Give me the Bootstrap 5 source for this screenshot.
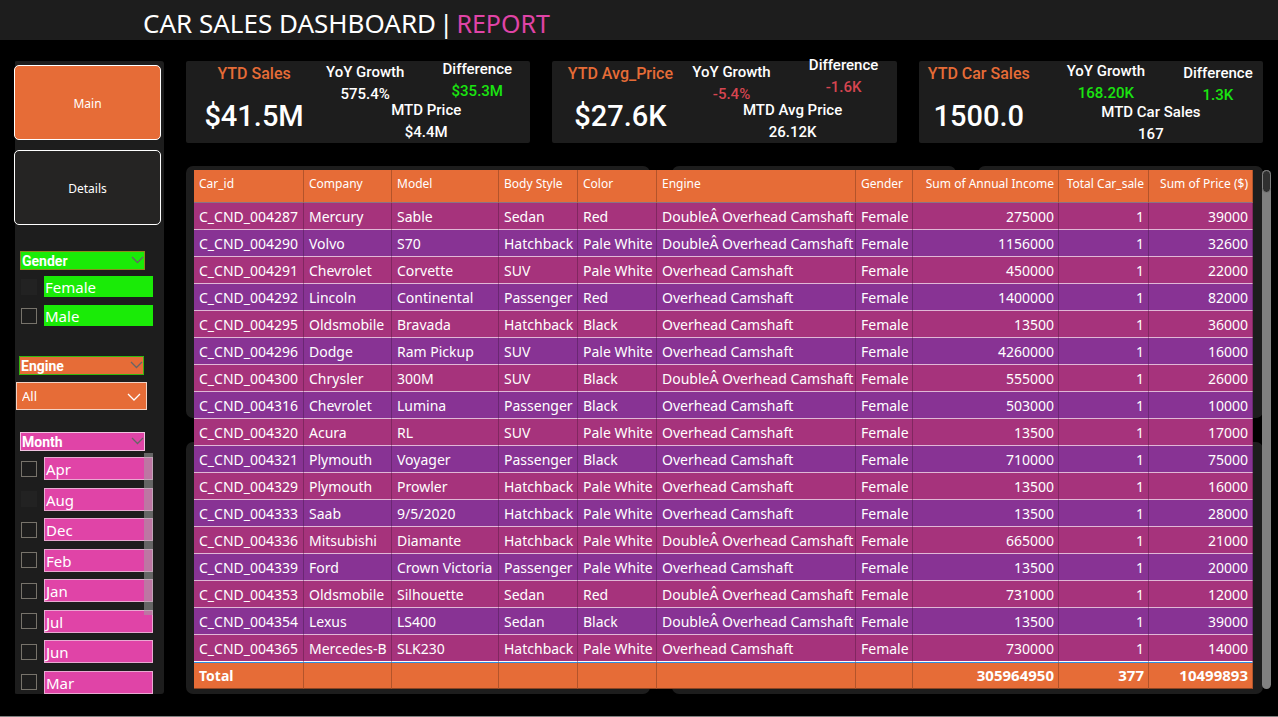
<!DOCTYPE html>
<html lang="en">
<head>
<meta charset="utf-8">
<meta name="viewport" content="width=device-width, initial-scale=1">
<title>Car Sales Dashboard | Report</title>
<link rel="stylesheet" href="https://cdn.jsdelivr.net/npm/bootstrap@5.3.0/dist/css/bootstrap.min.css">
<style>
  :root { --panel: #1d1d1d; --orange: #e66c37; --pink: #e044a7; --green: #1aeb07; --good: #1ae410; --bad: #d64550; }
  body { background: #000; color: #fff; font-family: "Noto Sans", "Open Sans", sans-serif; font-size: 14px; border-bottom: 1px solid #808080; }
  .din { font-family: Roboto, "Liberation Sans", sans-serif; font-weight: 500; }
  .topbar { background: var(--panel); height: 40px; padding: 4px 0 0 143px; }
  .topbar h1 { display: flex; gap: 3px; font-size: 26px; line-height: 38px; font-weight: 400; white-space: nowrap; }
  .pinktext { color: var(--pink); font-size: 25px; }
  .shell { gap: 22px; padding: 21px 7px 22px 14px; }

  /* Sidebar */
  .side { width: 150px; background: linear-gradient(to right, transparent 1px, var(--panel) 1px); border-radius: 3px; }
  .side nav { gap: 10px; padding-top: 4px; }
  .navbtn { width: 147px; height: 75px; padding-top: 3px; border: 1px solid #fff; border-radius: 5px; background: #252423; color: #fff; font-size: 12px; }
  .navbtn.active-page { background: var(--orange); }
  .slicer-head { width: 125px; height: 19px; margin-left: 6px; padding: 1px 0 0 1px; color: #fff; font-size: 14px; line-height: 17px; font-weight: 700; border: 1px solid; }
  .slicer-head svg { color: #666; stroke-width: 1.300; }
  .head-green { margin-top: 26px; background: var(--green); border-color: #8d8a1c; }
  .head-orange { margin-top: 30px; margin-left: 5px; background: var(--orange); border-color: #35b60e; }
  .head-pink { margin-top: 22px; background: var(--pink); border-color: #f0c4e0; }
  .slicer-list { margin-top: 6px; }
  .opt { padding-left: 7px; gap: 7px; }
  .opt input { appearance: none; flex: none; width: 16px; height: 16px; margin: 0; border: 1px solid #77736b; background: transparent; }
  .opt input.quiet { border-color: #222; background: #222; }
  .opt label { width: 109px; padding-left: 1px; font-size: 15px; }
  .opt-green label { height: 21px; line-height: 22px; background: var(--green); }
  .opt-pink label { height: 23px; line-height: 22px; background: var(--pink); border: 1px solid #e9a9d2; }
  .engine-pick { width: 131px; height: 28px; margin: 7px 0 0 2px; }
  .engine-pick select { appearance: none; width: 100%; height: 100%; padding: 2px 5px 0; color: #fff; background: var(--orange); border: 1px solid #f3d2c4; border-radius: 0; font-size: 13px; }
  .engine-pick svg { position: absolute; right: 6px; top: 11px; pointer-events: none; }
  .month-thumb { position: absolute; right: 11px; top: -4px; width: 9px; height: 162px; background: rgba(160,160,160,.55); }

  /* KPI cards */
  .content { min-width: 0; padding-right: 8px; }
  .kpis { display: grid; grid-template-columns: repeat(3, 1fr); gap: 22px; }
  .kpi { display: grid; grid-template-columns: 136fr 102fr 106fr; grid-template-rows: 41px 41px; background: var(--panel); border-radius: 2px; text-align: center; white-space: nowrap; }
  .kpi-wide { grid-template-columns: 120fr 134fr 90fr; }
  .kpi-main { grid-row: span 2; padding-top: 2px; }
  .kpi-name { color: var(--orange); font-size: 16px; line-height: 22px; }
  .kpi-value { font-size: 29px; line-height: 40px; margin-top: 11px; }
  .metric { display: flex; flex-direction: column; gap: 6px; font-size: 15px; line-height: 16px; }
  .metric-yoy { padding: 3px 16px 0 0; }
  .kpi-wide .metric-yoy { padding: 2px 0 0; }
  .kpi-wide .metric-diff { padding-top: 4px; }
  .metric-raised { margin-top: -4px; }
  .metric-mtd { grid-column: 2 / 4; }
  .kpi-wide .metric-mtd { padding-top: 2px; }
  .good { color: var(--good); } .bad { color: var(--bad); }

  /* Data table over its backing panels */
  .stage { margin-top: 23px; padding: 4px 10px 5px 8px; }
  .backing { position: absolute; inset: 0; display: grid; grid-template-columns: 464fr 285fr 285fr; grid-template-rows: 1fr 1fr; gap: 24px 22px; }
  .backing span { background: var(--panel); border-radius: 7px; }
  .backing span:last-child { grid-column: 2 / 4; }
  .cars { position: relative; table-layout: fixed; width: 100%; border-collapse: separate; border-spacing: 0; white-space: nowrap; }
  .cars th, .cars td { padding: 0 4px 0 5px; border-right: 1px solid rgba(0,0,0,.22); overflow: hidden; }
  .cars thead th { height: 33px; padding-bottom: 5px; background: var(--orange); border-bottom: 1px solid #8a7285; font-size: 12px; font-weight: 400; }
  .cars tbody td { height: 27px; padding-top: 1px; line-height: 25px; background: #a6337c; border-bottom: 1px solid #e0b8d6; }
  .cars tbody tr:nth-child(even) td { background: #883394; }
  .cars tbody tr:last-child td { border-bottom-color: #fff; }
  .cars tfoot td, .cars tfoot th { height: 27px; background: var(--orange); font-weight: 700; border-top: 1px solid #2b8ee6; border-bottom: 1px solid #8c4524; }
  .cars tfoot td { font-size: 15px; }
  .scroll-track { position: absolute; right: -8px; top: 4px; bottom: 5px; width: 9px; background: #808080; border-radius: 5px; }
  .scroll-track i { display: block; height: 23px; background: #303030; border: 1px solid #808080; border-radius: 5px; }
</style>
</head>
<body class="min-vh-100 overflow-x-hidden">
<header class="topbar">
  <h1 class="m-0"><span>CAR SALES DASHBOARD</span> <span>|</span> <span class="pinktext">REPORT</span></h1>
</header>

<div class="shell d-flex">
  <aside class="side d-flex flex-column flex-shrink-0">
    <nav class="d-flex flex-column">
      <button type="button" class="navbtn active-page">Main</button>
      <button type="button" class="navbtn">Details</button>
    </nav>

    <button type="button" class="slicer-head head-green din d-flex justify-content-between">Gender
      <svg width="13" height="14" viewBox="0 0 13 14" fill="none" stroke="currentColor"><path d="M1 4l5.500 5.500L12 4"/></svg></button>
    <div class="slicer-list d-flex flex-column gap-2">
      <div class="opt opt-green d-flex align-items-center"><input class="quiet" type="checkbox" id="g1"><label for="g1">Female</label></div>
      <div class="opt opt-green d-flex align-items-center"><input type="checkbox" id="g2"><label for="g2">Male</label></div>
    </div>

    <button type="button" class="slicer-head head-orange din d-flex justify-content-between">Engine
      <svg width="13" height="14" viewBox="0 0 13 14" fill="none" stroke="currentColor"><path d="M1 4l5.500 5.500L12 4"/></svg></button>
    <div class="engine-pick position-relative">
      <select aria-label="Engine"><option>All</option><option>Overhead Camshaft</option></select>
      <svg width="14" height="9" viewBox="0 0 14 9" fill="none" stroke="#fff" stroke-width="1.300"><path d="M1 1l6 6 6-6"/></svg>
    </div>

    <button type="button" class="slicer-head head-pink din d-flex justify-content-between">Month
      <svg width="13" height="14" viewBox="0 0 13 14" fill="none" stroke="currentColor"><path d="M1 4l5.500 5.500L12 4"/></svg></button>
    <div class="slicer-list position-relative d-flex flex-column flex-fill justify-content-between">
      <div class="opt opt-pink d-flex align-items-center"><input type="checkbox" id="m1"><label for="m1">Apr</label></div>
      <div class="opt opt-pink d-flex align-items-center"><input class="quiet" type="checkbox" id="m2"><label for="m2">Aug</label></div>
      <div class="opt opt-pink d-flex align-items-center"><input type="checkbox" id="m3"><label for="m3">Dec</label></div>
      <div class="opt opt-pink d-flex align-items-center"><input type="checkbox" id="m4"><label for="m4">Feb</label></div>
      <div class="opt opt-pink d-flex align-items-center"><input type="checkbox" id="m5"><label for="m5">Jan</label></div>
      <div class="opt opt-pink d-flex align-items-center"><input type="checkbox" id="m6"><label for="m6">Jul</label></div>
      <div class="opt opt-pink d-flex align-items-center"><input type="checkbox" id="m7"><label for="m7">Jun</label></div>
      <div class="opt opt-pink d-flex align-items-center"><input type="checkbox" id="m8"><label for="m8">Mar</label></div>
      <div class="month-thumb"></div>
    </div>
  </aside>

  <main class="content flex-fill">
    <section class="kpis din">
      <div class="kpi">
        <div class="kpi-main"><div class="kpi-name">YTD Sales</div><div class="kpi-value">$41.5M</div></div>
        <div class="metric metric-yoy"><span>YoY Growth</span><span>575.4%</span></div>
        <div class="metric metric-diff"><span>Difference</span><span class="good">$35.3M</span></div>
        <div class="metric metric-mtd"><span>MTD Price</span><span>$4.4M</span></div>
      </div>
      <div class="kpi">
        <div class="kpi-main"><div class="kpi-name">YTD Avg_Price</div><div class="kpi-value">$27.6K</div></div>
        <div class="metric metric-yoy"><span>YoY Growth</span><span class="bad">-5.4%</span></div>
        <div class="metric metric-diff metric-raised"><span>Difference</span><span class="bad">-1.6K</span></div>
        <div class="metric metric-mtd"><span>MTD Avg Price</span><span>26.12K</span></div>
      </div>
      <div class="kpi kpi-wide">
        <div class="kpi-main"><div class="kpi-name">YTD Car Sales</div><div class="kpi-value">1500.0</div></div>
        <div class="metric metric-yoy"><span>YoY Growth</span><span class="good">168.20K</span></div>
        <div class="metric metric-diff"><span>Difference</span><span class="good">1.3K</span></div>
        <div class="metric metric-mtd"><span>MTD Car Sales</span><span>167</span></div>
      </div>
    </section>

    <section class="stage position-relative">
      <div class="backing"><span></span><span></span><span></span><span></span><span></span></div>
      <table class="cars">
        <colgroup><col style="width:110px"><col style="width:88px"><col style="width:107px"><col style="width:79px"><col style="width:79px"><col style="width:199px"><col style="width:57px"><col style="width:146px"><col style="width:90px"><col style="width:104px"></colgroup>
        <thead><tr><th>Car_id</th><th>Company</th><th>Model</th><th>Body Style</th><th>Color</th><th>Engine</th><th>Gender</th><th class="text-end">Sum of Annual Income</th><th class="text-end">Total Car_sale</th><th class="text-end">Sum of Price ($)</th></tr></thead>
        <tbody id="rows"></tbody>
        <tfoot><tr><th>Total</th><td></td><td></td><td></td><td></td><td></td><td></td><td class="text-end">305964950</td><td class="text-end">377</td><td class="text-end">10499893</td></tr></tfoot>
      </table>
      <div class="scroll-track"><i></i></div>
    </section>
  </main>
</div>

<script src="https://cdn.jsdelivr.net/npm/bootstrap@5.3.0/dist/js/bootstrap.bundle.min.js"></script>
<script>
  // id, company, model, body, colour, engine (D = double overhead), income, price
  const cars = `004287|Mercury|Sable|Sedan|Red|D|275000|39000
004290|Volvo|S70|Hatchback|Pale White|D|1156000|32600
004291|Chevrolet|Corvette|SUV|Pale White|O|450000|22000
004292|Lincoln|Continental|Passenger|Red|O|1400000|82000
004295|Oldsmobile|Bravada|Hatchback|Black|O|13500|36000
004296|Dodge|Ram Pickup|SUV|Pale White|O|4260000|16000
004300|Chrysler|300M|SUV|Black|D|555000|26000
004316|Chevrolet|Lumina|Passenger|Black|O|503000|10000
004320|Acura|RL|SUV|Pale White|O|13500|17000
004321|Plymouth|Voyager|Passenger|Black|O|710000|75000
004329|Plymouth|Prowler|Hatchback|Pale White|O|13500|16000
004333|Saab|9/5/2020|Hatchback|Pale White|O|13500|28000
004336|Mitsubishi|Diamante|Hatchback|Pale White|D|665000|21000
004339|Ford|Crown Victoria|Passenger|Pale White|O|13500|20000
004353|Oldsmobile|Silhouette|Sedan|Red|D|731000|12000
004354|Lexus|LS400|Sedan|Black|D|13500|39000
004365|Mercedes-B|SLK230|Hatchback|Pale White|O|730000|14000`;
  document.getElementById('rows').innerHTML = cars.split('\n').map(line => {
    const [id, company, model, body, color, eng, income, price] = line.split('|');
    const engine = (eng === 'D' ? 'DoubleÂ ' : '') + 'Overhead Camshaft';
    const left = ['C_CND_' + id, company, model, body, color, engine, 'Female'].map(t => `<td>${t}</td>`).join('');
    const right = [income, 1, price].map(t => `<td class="text-end">${t}</td>`).join('');
    return `<tr>${left}${right}</tr>`;
  }).join('');
</script>
</body>
</html>
